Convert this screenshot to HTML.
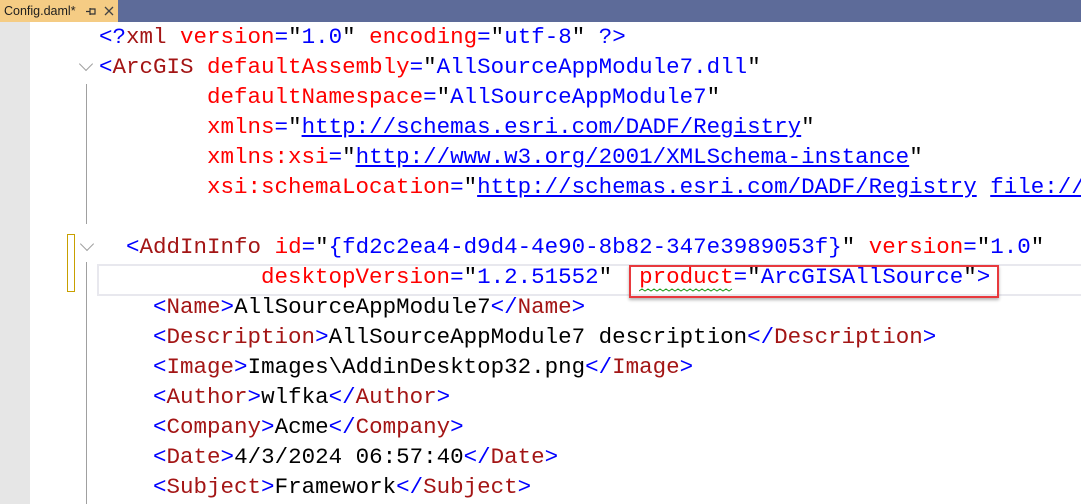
<!DOCTYPE html>
<html><head><meta charset="utf-8"><style>
body{margin:0;width:1081px;height:504px;overflow:hidden;background:#fff;position:relative;font-family:"Liberation Sans",sans-serif}
.bar{position:absolute;left:0;top:0;width:1081px;height:22px;background:#5d6b99}
.tab{position:absolute;left:0;top:0;width:118px;height:22px;background:#f5cc84;font-size:12.5px;color:#1e1e1e;line-height:22px}
.tab span{position:absolute}
.gut{position:absolute;left:0;top:22px;width:30px;height:482px;background:#e6e6e6}
.vl{position:absolute;left:86px;width:1px;background:#a0a0a0}
.code{position:absolute;left:99px;top:22px;font-family:"Liberation Mono",monospace;font-size:22.5px;line-height:30px;white-space:pre;color:#000}
.b{color:#0000ff}.n{color:#a31515}.a{color:#ff0000}.u{color:#0000ff;text-decoration:underline}
.chev{position:absolute;width:9px;height:9px;border-right:1.5px solid #a0a0a0;border-bottom:1.5px solid #a0a0a0;transform:rotate(45deg)}
</style></head><body>
<div class="bar"></div>
<div class="tab"><span style="left:4px">Config.daml*</span>
<svg style="position:absolute;left:86px;top:7px" width="10" height="9"><path d="M0 4.5H4M4 1V8M4 2H9V7H4" fill="none" stroke="#333" stroke-width="1.2"/></svg>
<svg style="position:absolute;left:104px;top:6px" width="10" height="10"><path d="M1 1L9 9M9 1L1 9" stroke="#444" stroke-width="1.3"/></svg></div>
<div class="gut"></div>
<div class="vl" style="top:84px;height:140px"></div>
<div class="vl" style="top:262px;height:242px"></div>
<div class="chev" style="left:81px;top:59px"></div>
<div class="chev" style="left:82px;top:239px"></div>
<div style="position:absolute;left:67px;top:234px;width:6px;height:56px;border:1.5px solid #c8a000"></div>
<div style="position:absolute;left:97px;top:264px;width:990px;height:28px;border:2px solid #e8e8ee"></div>
<div style="position:absolute;left:629px;top:265px;width:366px;height:29px;border:2px solid #e8393d;box-shadow:0 2px 3px rgba(0,0,0,.3)"></div>
<svg style="position:absolute;left:639px;top:288px" width="96" height="6"><path d="M0 3 l3 -2 l3 2 l3 -2 l3 2 l3 -2 l3 2 l3 -2 l3 2 l3 -2 l3 2 l3 -2 l3 2 l3 -2 l3 2 l3 -2 l3 2 l3 -2 l3 2 l3 -2 l3 2 l3 -2 l3 2 l3 -2 l3 2 l3 -2 l3 2 l3 -2 l3 2 l3 -2 l3 2 l3 -2" fill="none" stroke="#1a9a1a" stroke-width="1"/></svg>
<div class="code"><span class="b">&lt;?</span><span class="n">xml</span> <span class="a">version</span><span class="b">=</span>"<span class="b">1.0</span>" <span class="a">encoding</span><span class="b">=</span>"<span class="b">utf-8</span>" <span class="b">?&gt;</span>
<span class="b">&lt;</span><span class="n">ArcGIS</span> <span class="a">defaultAssembly</span><span class="b">=</span>"<span class="b">AllSourceAppModule7.dll</span>"
        <span class="a">defaultNamespace</span><span class="b">=</span>"<span class="b">AllSourceAppModule7</span>"
        <span class="a">xmlns</span><span class="b">=</span>"<span class="u">http://schemas.esri.com/DADF/Registry</span>"
        <span class="a">xmlns:xsi</span><span class="b">=</span>"<span class="u">http://www.w3.org/2001/XMLSchema-instance</span>"
        <span class="a">xsi:schemaLocation</span><span class="b">=</span>"<span class="u">http://schemas.esri.com/DADF/Registry</span> <span class="u">file://</span>

  <span class="b">&lt;</span><span class="n">AddInInfo</span> <span class="a">id</span><span class="b">=</span>"<span class="b">{fd2c2ea4-d9d4-4e90-8b82-347e3989053f}</span>" <span class="a">version</span><span class="b">=</span>"<span class="b">1.0</span>"
            <span class="a">desktopVersion</span><span class="b">=</span>"<span class="b">1.2.51552</span>"  <span class="a">product</span><span class="b">=</span>"<span class="b">ArcGISAllSource</span>"<span class="b">&gt;</span>
    <span class="b">&lt;</span><span class="n">Name</span><span class="b">&gt;</span>AllSourceAppModule7<span class="b">&lt;/</span><span class="n">Name</span><span class="b">&gt;</span>
    <span class="b">&lt;</span><span class="n">Description</span><span class="b">&gt;</span>AllSourceAppModule7 description<span class="b">&lt;/</span><span class="n">Description</span><span class="b">&gt;</span>
    <span class="b">&lt;</span><span class="n">Image</span><span class="b">&gt;</span>Images\AddinDesktop32.png<span class="b">&lt;/</span><span class="n">Image</span><span class="b">&gt;</span>
    <span class="b">&lt;</span><span class="n">Author</span><span class="b">&gt;</span>wlfka<span class="b">&lt;/</span><span class="n">Author</span><span class="b">&gt;</span>
    <span class="b">&lt;</span><span class="n">Company</span><span class="b">&gt;</span>Acme<span class="b">&lt;/</span><span class="n">Company</span><span class="b">&gt;</span>
    <span class="b">&lt;</span><span class="n">Date</span><span class="b">&gt;</span>4/3/2024 06:57:40<span class="b">&lt;/</span><span class="n">Date</span><span class="b">&gt;</span>
    <span class="b">&lt;</span><span class="n">Subject</span><span class="b">&gt;</span>Framework<span class="b">&lt;/</span><span class="n">Subject</span><span class="b">&gt;</span></div>
</body></html>
